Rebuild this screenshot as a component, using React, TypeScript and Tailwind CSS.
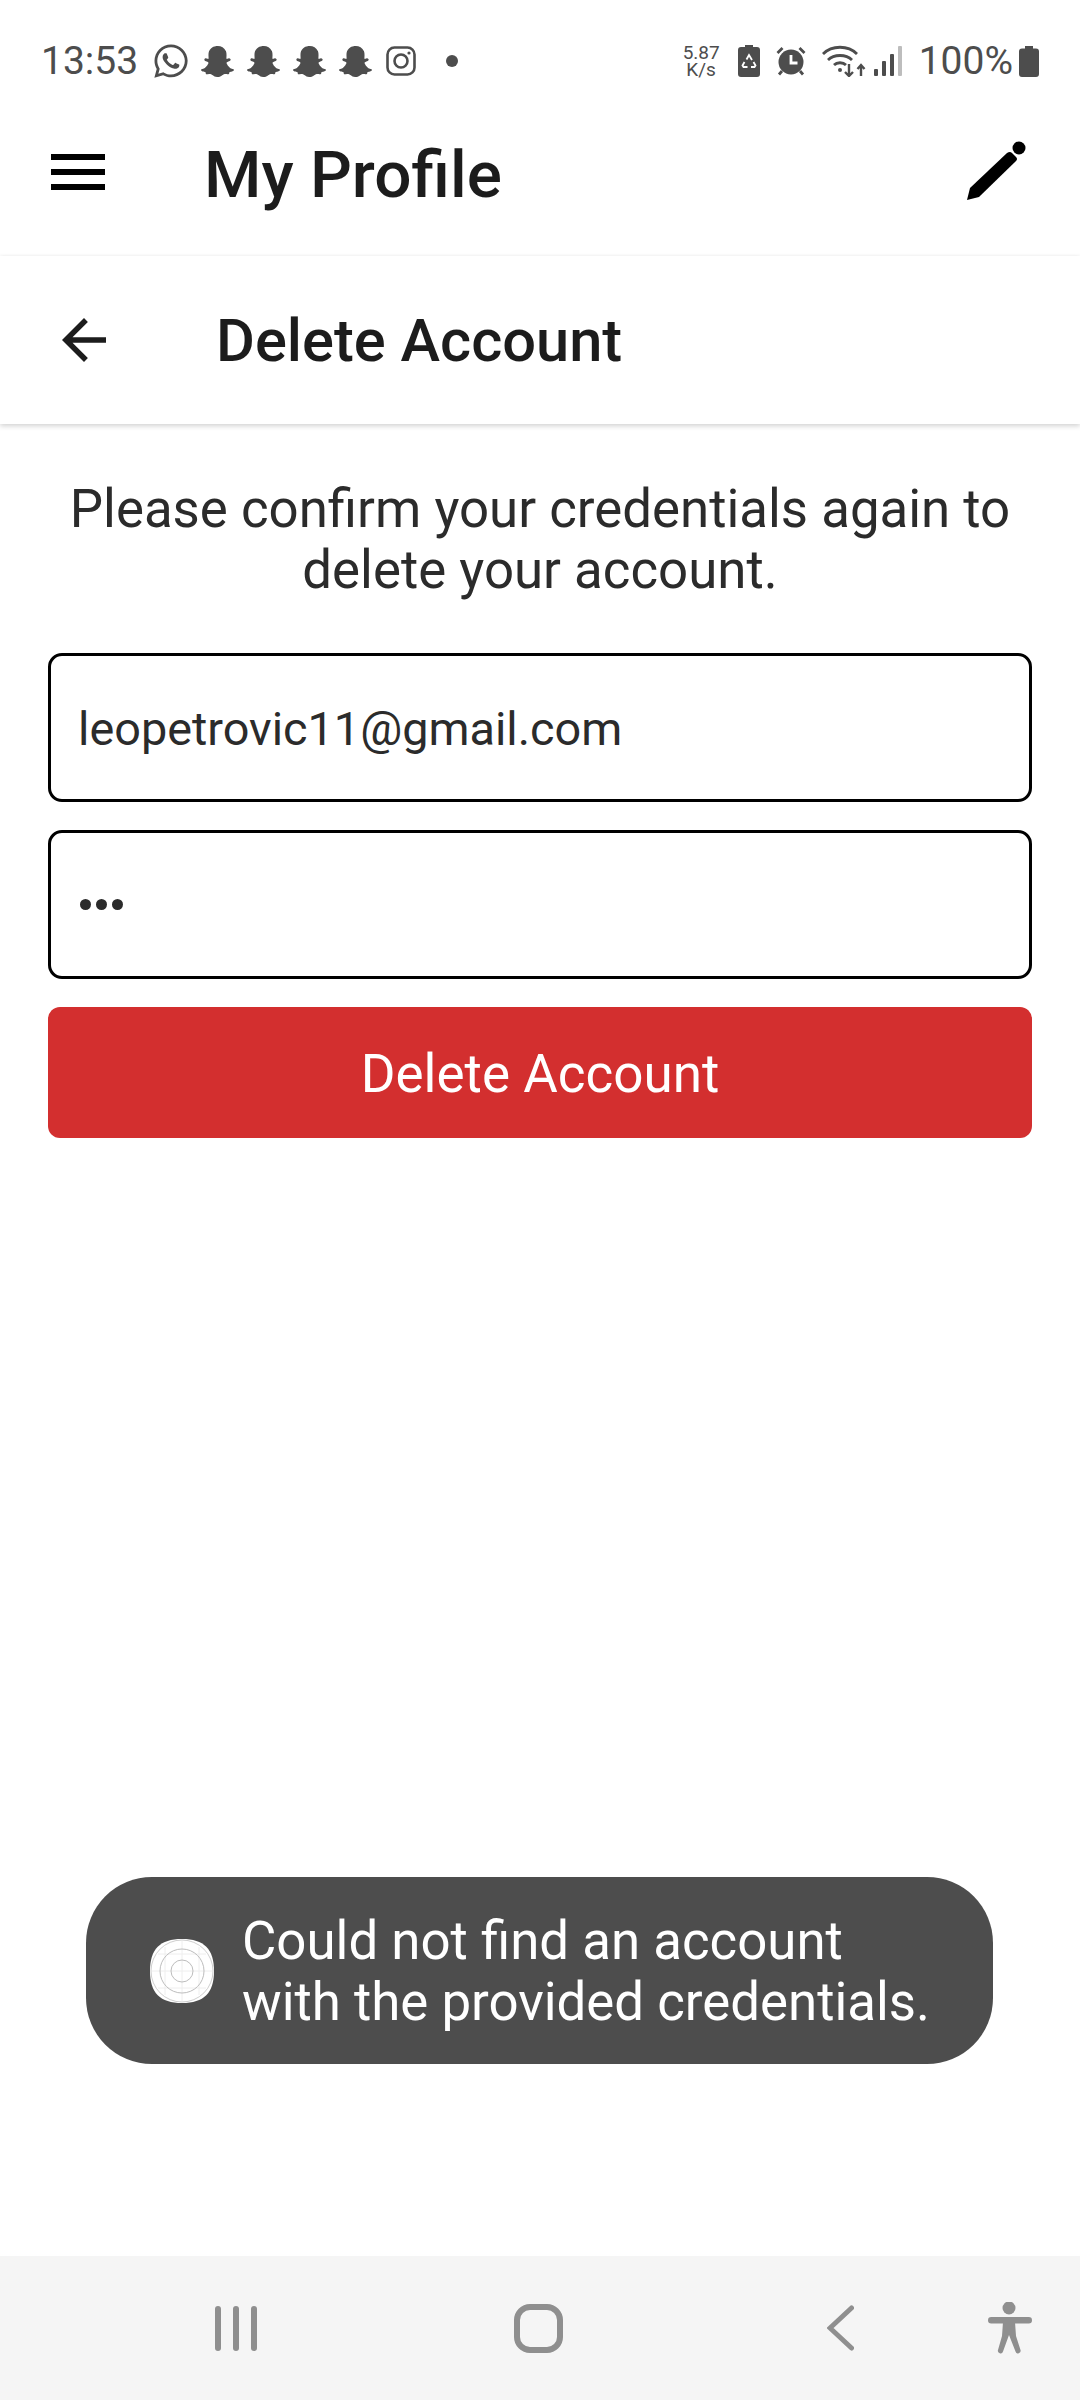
import { FaSnapchatGhost, FaWhatsapp } from "react-icons/fa";
import { MdArrowBack, MdMenu } from "react-icons/md";

function InstagramIcon() {
  return (
    <svg width="30" height="30" viewBox="0 0 30 30" fill="none" stroke="#4d4d4d" strokeWidth="2.6">
      <rect x="1.5" y="1.5" width="27" height="27" rx="7" />
      <circle cx="15" cy="15" r="6.5" />
      <circle cx="23" cy="7" r="1.6" fill="#4d4d4d" stroke="none" />
    </svg>
  );
}

function RecycleBatteryIcon() {
  return (
    <svg width="22" height="32" viewBox="0 0 22 32">
      <path d="M7 0h8v2h4a3 3 0 0 1 3 3v24a3 3 0 0 1-3 3H3a3 3 0 0 1-3-3V5a3 3 0 0 1 3-3h4z" fill="#4d4d4d" />
      <path
        d="M8.500 14.500L11 10l3 5M6.500 17l-2 3.500 1 1.500h4M13 22h3.500l1-1.500-2-3.500"
        fill="none"
        stroke="#fff"
        strokeWidth="1.800"
      />
    </svg>
  );
}

function AlarmIcon() {
  return (
    <svg width="30" height="30" viewBox="0 0 30 30">
      <circle cx="15" cy="16" r="12.500" fill="#4d4d4d" />
      <path d="M1.500 7l5-5M28.500 7l-5-5M6 25l-3 3.500M24 25l3 3.500" stroke="#4d4d4d" strokeWidth="2.800" fill="none" />
      <path d="M15 9v8h6.500" stroke="#fff" strokeWidth="2.800" fill="none" />
    </svg>
  );
}

function WifiIcon() {
  return (
    <svg width="44" height="32" viewBox="0 0 44 32" fill="none" stroke="#4d4d4d" strokeWidth="2.800">
      <path d="M1 9C10 0 26 0 35 9" />
      <path d="M6 15c6-6 18-6 24 0" />
      <path d="M12 20c3-3 9-3 12 0" />
      <circle cx="18" cy="25" r="2" fill="#4d4d4d" stroke="none" />
      <path d="M27 19v12M23 27l4 4 4-4" strokeWidth="2.400" />
      <path d="M39 31V20M35.500 24l3.500-4 3.500 4" strokeWidth="2.400" />
    </svg>
  );
}

function SignalIcon() {
  return (
    <svg width="28" height="30" viewBox="0 0 28 30">
      <rect x="0" y="23" width="4" height="7" rx="1" fill="#4d4d4d" />
      <rect x="8" y="15" width="4" height="15" rx="1" fill="#4d4d4d" />
      <rect x="16" y="8" width="4" height="22" rx="1" fill="#4d4d4d" />
      <rect x="24" y="0" width="4" height="30" rx="1" fill="#bdbdbd" />
    </svg>
  );
}

function BatteryIcon() {
  return (
    <svg width="20" height="31" viewBox="0 0 20 31">
      <path d="M6 0h8v2.500h3a3 3 0 0 1 3 3V28a3 3 0 0 1-3 3H3a3 3 0 0 1-3-3V5.500a3 3 0 0 1 3-3h3z" fill="#4d4d4d" />
    </svg>
  );
}

function PencilIcon() {
  return (
    <svg width="60" height="60" viewBox="0 0 60 60" fill="#000">
      <path d="M1 59l3-12L41 12q3-2 5 0l4 4q2 2 0 4L13 56z" />
      <circle cx="53" cy="7" r="6.500" />
    </svg>
  );
}

function AccessibilityIcon() {
  return (
    <svg width="44" height="52" viewBox="0 0 44 52" fill="#8f8f8f">
      <circle cx="21" cy="6" r="6.500" />
      <rect x="0" y="15" width="44" height="6.500" rx="3.250" />
      <path d="M15 20h12l1 14 4.500 14a2.500 2.500 0 0 1-5 1.500L21 33l-6 16.500a2.500 2.500 0 0 1-5-1.500l4-14z" />
    </svg>
  );
}

function StatusBar() {
  return (
    <div className="flex h-[122px] items-center justify-between pl-[41px] pr-[41px] text-[#4d4d4d]">
      <div className="flex items-center">
        <span className="text-[39px] leading-none">13:53</span>
        <FaWhatsapp className="ml-[14px] text-[38px]" />
        <div className="ml-[11px] flex gap-[13px] text-[33px]">
          <FaSnapchatGhost />
          <FaSnapchatGhost />
          <FaSnapchatGhost />
          <FaSnapchatGhost />
        </div>
        <div className="ml-[14px]">
          <InstagramIcon />
        </div>
        <div className="ml-[30px] h-3 w-3 rounded-full bg-[#4d4d4d]" />
      </div>
      <div className="flex items-center">
        <div className="flex flex-col items-center text-[19px] leading-[17px]">
          <span>5.87</span>
          <span>K/s</span>
        </div>
        <div className="ml-[18px]">
          <RecycleBatteryIcon />
        </div>
        <div className="ml-[16px]">
          <AlarmIcon />
        </div>
        <div className="ml-[16px]">
          <WifiIcon />
        </div>
        <div className="ml-[8px]">
          <SignalIcon />
        </div>
        <span className="ml-[17px] text-[39px] leading-none">100%</span>
        <div className="ml-[6px]">
          <BatteryIcon />
        </div>
      </div>
    </div>
  );
}

export default function App() {
  return (
    <div className="relative flex h-[2400px] w-[1080px] flex-col overflow-hidden bg-white font-['Roboto',sans-serif]">
      <StatusBar />

      <div className="flex h-[134px] items-start bg-white pl-[42px] pr-[54px]">
        <MdMenu className="mt-[14px] text-[72px] text-black" />
        <h1 className="ml-[90px] mt-[17px] flex-1 text-[65.700px] font-medium leading-[72px] text-[#1c1c1c]">
          My Profile
        </h1>
        <div className="mt-[19px]">
          <PencilIcon />
        </div>
      </div>

      <div className="flex h-[168px] items-center bg-white pl-[51px] shadow-[0_2px_5px_rgba(0,0,0,0.18),0_-1px_3px_rgba(0,0,0,0.02)]">
        <MdArrowBack className="text-[66px] text-[#1c1c1c]" />
        <h2 className="ml-[99px] pt-[3px] text-[59.600px] font-medium leading-none text-[#1c1c1c]">Delete Account</h2>
      </div>

      <div className="flex flex-1 flex-col px-[48px] pt-[55px]">
        <p className="text-center text-[52.800px] leading-[61px] text-[#2b2b2b]">
          Please confirm your credentials again to
          <br />
          delete your account.
        </p>
        <div className="mt-[52px] flex h-[149px] items-center rounded-[14px] border-[3px] border-black px-[27px] pt-[3px] text-[46.800px] text-[#2b2b2b]">
          leopetrovic11@gmail.com
        </div>
        <div className="mt-[28px] flex h-[149px] items-center gap-[5px] rounded-[14px] border-[3px] border-black px-[29px]">
          <span className="h-[11px] w-[11px] rounded-full bg-[#2b2b2b]" />
          <span className="h-[11px] w-[11px] rounded-full bg-[#2b2b2b]" />
          <span className="h-[11px] w-[11px] rounded-full bg-[#2b2b2b]" />
        </div>
        <button className="mt-[28px] h-[131px] rounded-[12px] bg-[#d32f2f] pt-[4px] text-[53px] text-white">
          Delete Account
        </button>
      </div>

      <div className="flex h-[144px] items-center bg-[#f5f5f5]">
        <div className="ml-[215px] flex gap-[12px]">
          <span className="h-[45px] w-[6px] rounded-full bg-[#8f8f8f]" />
          <span className="h-[45px] w-[6px] rounded-full bg-[#8f8f8f]" />
          <span className="h-[45px] w-[6px] rounded-full bg-[#8f8f8f]" />
        </div>
        <div className="ml-[257px] h-[49px] w-[49px] rounded-[16px] border-[6px] border-[#8f8f8f]" />
        <svg className="ml-[264px]" width="27" height="46" viewBox="0 0 27 46" fill="none" stroke="#8f8f8f" strokeWidth="5" strokeLinecap="round">
          <path d="M24.500 3L3 23l21.500 20" />
        </svg>
        <div className="ml-[134px]">
          <AccessibilityIcon />
        </div>
      </div>

      <div className="absolute left-[86px] top-[1877px] flex h-[187px] w-[907px] items-center rounded-[66px] bg-[#4d4d4d] pl-[64px]">
        <svg width="64" height="64" viewBox="0 0 64 64" fill="none">
          <path d="M32 0C54 0 64 10 64 32S54 64 32 64 0 54 0 32 10 0 32 0z" fill="#fff" />
          <path d="M32 2v60M2 32h60M15 8v48M49 8v48M8 15h48M8 49h48" stroke="#eeeeee" strokeWidth="1" />
          <circle cx="32" cy="32" r="31" stroke="#cfcfcf" strokeWidth="1" />
          <circle cx="32" cy="32" r="22" stroke="#bdbdbd" strokeWidth="1" />
          <circle cx="32" cy="32" r="11" stroke="#bdbdbd" strokeWidth="1" />
        </svg>
        <p className="ml-[28px] pt-[2px] text-[52.800px] leading-[61px] text-white">
          Could not find an account
          <br />
          with the provided credentials.
        </p>
      </div>
    </div>
  );
}
